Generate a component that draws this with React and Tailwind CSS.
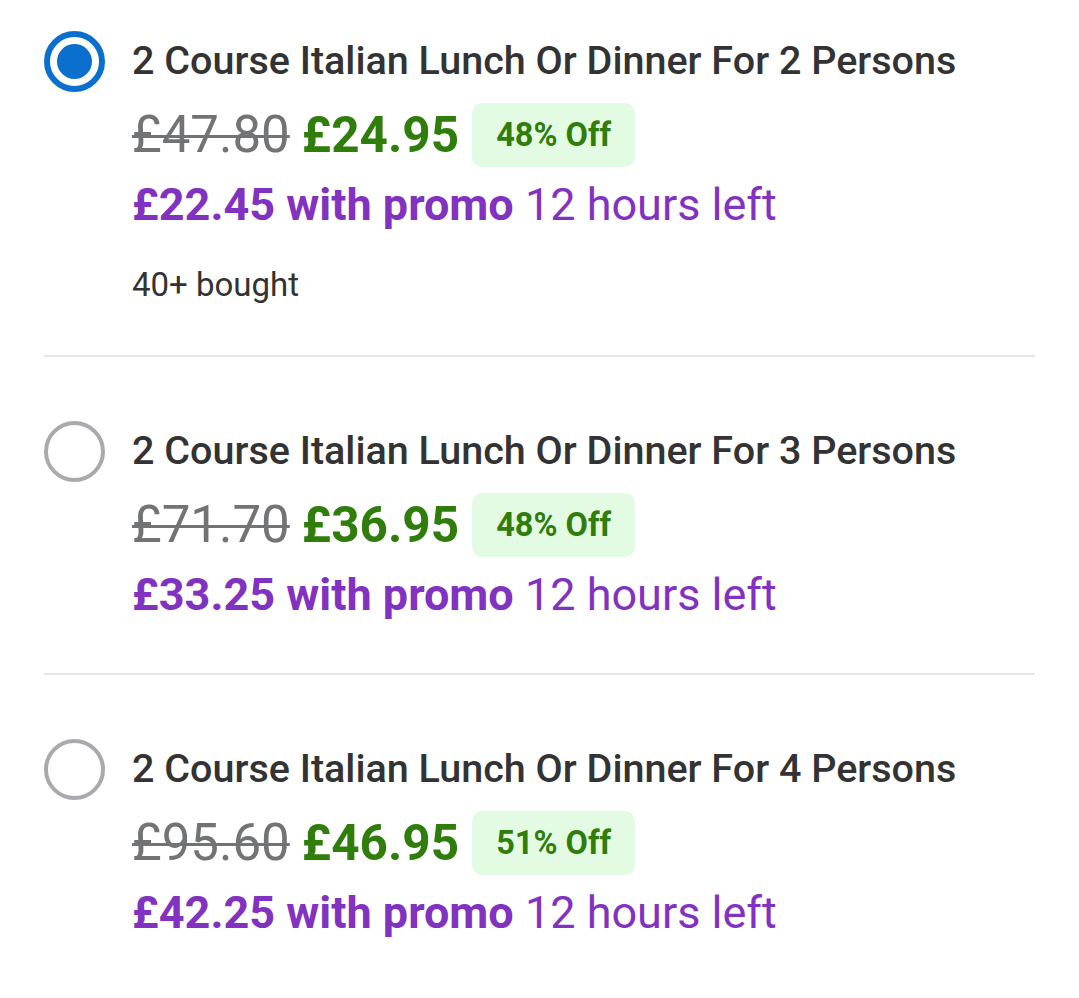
import React from 'react';

const options = [
  { persons: 2, was: '£47.80', now: '£24.95', off: '48% Off', promo: '£22.45', bought: '40+ bought', selected: true },
  { persons: 3, was: '£71.70', now: '£36.95', off: '48% Off', promo: '£33.25' },
  { persons: 4, was: '£95.60', now: '£46.95', off: '51% Off', promo: '£42.25' },
];

function Radio({ checked }) {
  if (checked) {
    return (
      <div className="w-[61px] h-[61px] rounded-full border-[6px] border-[#0b6fce] flex items-center justify-center shrink-0">
        <div className="w-[35px] h-[35px] rounded-full bg-[#0b6fce]" />
      </div>
    );
  }
  return <div className="w-[61px] h-[61px] rounded-full border-[4px] border-[#a8aaad] shrink-0" />;
}

function Option({ o, first, last }) {
  return (
    <div className={`flex gap-[27px] ${first ? 'pt-[31px]' : 'pt-[64px]'} ${first ? 'pb-[50px]' : 'pb-[48px]'} ${last ? '' : 'border-b-2 border-[#e6e6e6]'}`}>
      <Radio checked={o.selected} />
      <div className="flex flex-col">
        <div className="text-[39.5px] leading-[60px] font-medium text-[#333333] whitespace-nowrap">
          2 Course Italian Lunch Or Dinner For {o.persons} Persons
        </div>
        <div className="flex items-center mt-[12px] h-[64px]">
          <span className="text-[51px] leading-[64px] text-[#727375] line-through decoration-[3px]">{o.was}</span>
          <span className="ml-[12px] text-[49.5px] leading-[64px] font-bold text-[#2f7d0b]">{o.now}</span>
          <span className="ml-[13px] h-[64px] px-[24px] rounded-[10px] bg-[#e4fbe3] flex items-center text-[32.5px] font-bold text-[#2f7d0b]">{o.off}</span>
        </div>
        <div className="text-[45px] leading-[60px] text-[#8232c1] mt-[8px] whitespace-nowrap">
          <span className="font-bold">{o.promo} with promo</span> 12 hours left
        </div>
        {o.bought && (
          <div className="text-[33px] leading-[40px] text-[#333333] mt-[30px]">{o.bought}</div>
        )}
      </div>
    </div>
  );
}

export default function App() {
  return (
    <div className="w-[1079px] h-[998px] bg-white px-[44px] font-['Roboto',sans-serif]">
      {options.map((o, i) => (
        <Option key={o.persons} o={o} first={i === 0} last={i === options.length - 1} />
      ))}
    </div>
  );
}
